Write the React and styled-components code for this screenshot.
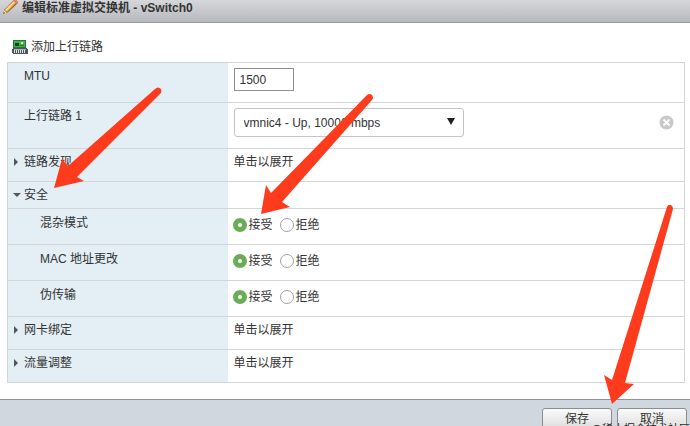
import { useState } from 'react';
import styled, { createGlobalStyle } from 'styled-components';

const GlobalStyle = createGlobalStyle`
  * {
    box-sizing: border-box;
  }

  body {
    margin: 0;
    background: #ffffff;
    color: #333333;
    font-family: "Liberation Sans", "Noto Sans CJK SC", sans-serif;
    font-size: 12px;
    line-height: 18px;
  }

  button,
  input,
  select {
    font: inherit;
    color: inherit;
  }
`;

const Dialog = styled.main`
  position: relative;
  display: flex;
  flex-direction: column;
  height: 100vh;
  overflow: hidden;
`;

const TitleBar = styled.header`
  display: flex;
  flex-shrink: 0;
  align-items: flex-start;
  gap: 4px;
  height: 23px;
  padding-left: 2px;
  background: linear-gradient(#d6d7db, #b7b8bd);
  border-bottom: 1px solid #999a9d;
`;

const Title = styled.h1`
  margin: 0;
  font-size: 12px;
  line-height: 16px;
  font-weight: bold;
`;

const Content = styled.div`
  flex: 1;
  padding: 15px 5px 0 7px;
`;

const AddUplink = styled.button`
  display: flex;
  align-items: center;
  gap: 3px;
  height: 18px;
  margin: 0 0 6px 5px;
  padding: 0;
  border: none;
  background: none;
  cursor: pointer;
`;

const Settings = styled.table`
  width: 100%;
  table-layout: fixed;
  border-collapse: collapse;
  border: 1px solid #d4d5d7;
`;

const Row = styled.tr`
  height: ${props => props.$height}px;
  border-top: 1px solid #d4d5d7;
`;

const LabelCell = styled.th`
  width: 220px;
  padding: ${props => (props.$nested ? 5 : 4)}px 0 0 ${props => (props.$nested ? 32 : props.$expander ? 5 : 16)}px;
  background: #e3eef5;
  font-weight: normal;
  text-align: left;
  vertical-align: top;
`;

const ValueCell = styled.td`
  padding: ${props => props.$top || 4}px 10px 0 ${props => props.$left || 6}px;
  vertical-align: top;
`;

const Expander = styled.button`
  display: flex;
  align-items: center;
  gap: 3px;
  padding: 0;
  border: none;
  background: none;
  cursor: pointer;
`;

const MtuInput = styled.input`
  display: block;
  width: 60px;
  height: 23px;
  padding: 0 5px;
  border: 1px solid #8e8e8e;
  background: #ffffff;
`;

const UplinkLine = styled.div`
  display: flex;
  align-items: center;
  justify-content: space-between;
`;

const SelectBox = styled.div`
  position: relative;
  width: 230px;
`;

const Select = styled.select`
  display: block;
  width: 100%;
  height: 29px;
  padding: 0 24px 0 9px;
  appearance: none;
  border: 1px solid #c4c4c4;
  border-radius: 3px;
  background: #ffffff;
`;

const SelectArrow = styled.svg`
  position: absolute;
  top: 10px;
  right: 9px;
  pointer-events: none;
`;

const RemoveButton = styled.button`
  display: flex;
  padding: 0;
  border: none;
  background: none;
  cursor: pointer;
`;

const Choices = styled.div`
  display: flex;
  gap: 7px;
`;

const Choice = styled.label`
  display: flex;
  align-items: center;
  gap: 2px;
`;

const Radio = styled.input`
  width: 14px;
  height: 14px;
  margin: 0;
  appearance: none;
  border: 1px solid #a3a3a3;
  border-radius: 50%;
  background: #ffffff;

  &:checked {
    border: 5px solid #6aac57;
  }
`;

const Footer = styled.footer`
  display: flex;
  flex-shrink: 0;
  justify-content: flex-end;
  gap: 5px;
  height: 27px;
  padding: 8px 3px 0;
  border-top: 1px solid #8f9298;
  background: #d0d7df;
`;

const FooterButton = styled.button`
  flex-shrink: 0;
  width: 70px;
  height: 22px;
  padding: 0;
  border: 1px solid #8a8c8f;
  border-radius: 3px;
  background: linear-gradient(#fbfbfb, #dddddd);
`;

const Watermark = styled.div`
  position: absolute;
  right: 0;
  bottom: -12px;
  color: #222222;
  font-size: 11px;
  text-shadow: 0 0 1px #ffffff;
  white-space: nowrap;
`;

const Arrows = styled.svg`
  position: absolute;
  top: 0;
  left: 0;
  overflow: visible;
  pointer-events: none;
`;

const PencilIcon = () => (
  <svg width="16" height="16" viewBox="0 0 16 16" aria-hidden="true">
    <path d="M1 14l1-4L12 0h2l2 2v1L5 13z" fill="#8c5a24" />
    <path d="M3 10l9-9 2 2-9 9z" fill="#f6b545" />
    <path d="M3 10l9-9 1 1-9 9z" fill="#ffe39a" />
    <path d="M2 10l3 3-4 1z" fill="#f7dfc0" />
    <path d="M1 14l1-2 1 1z" fill="#333333" />
    <path d="M11 1l1-1h2l2 2v1l-1 1z" fill="#d98572" />
  </svg>
);

const AdapterIcon = () => (
  <svg width="16" height="14" viewBox="0 0 16 14" aria-hidden="true">
    <path d="M1 0h13v8H1z" fill="#1f7a35" />
    <path d="M2 1h11v6H2z" fill="#45b04d" />
    <path d="M3 3h4v3H3z" fill="#173f26" />
    <path d="M9 2h2v2H9z" fill="#dff0a0" />
    <path d="M8 5h4v1H8z" fill="#1f7a35" />
    <path d="M1 8h14v1h1v5H1v-1H0V9h1z" fill="#4d5660" />
    <path d="M2 9h12v1H2z" fill="#a9b1b9" />
    <path d="M2.5 10v3M4.5 10v3M6.5 10v3M8.5 10v3M10.5 10v3M12.5 10v3" stroke="#dfe4e8" />
  </svg>
);

const Triangle = ({ open }) => (
  <svg width="8" height="8" viewBox="0 0 8 8" aria-hidden="true">
    <path d={open ? 'M0 2h8L4 6z' : 'M1 0l4 4-4 4z'} fill="#555555" />
  </svg>
);

const RemoveIcon = () => (
  <svg width="15" height="15" viewBox="0 0 15 15" aria-hidden="true">
    <circle cx="7.5" cy="7.5" r="7" fill="#c9c9c9" />
    <path d="M4.5 4.5l6 6M10.5 4.5l-6 6" stroke="#ffffff" strokeWidth="1.8" />
  </svg>
);

const policies = [
  { id: 'promiscuous', label: '混杂模式' },
  { id: 'mac', label: 'MAC 地址更改' },
  { id: 'forged', label: '伪传输' },
];

const SectionRow = ({ label, open, height, onToggle }) => (
  <Row $height={height}>
    <LabelCell $expander scope="row">
      <Expander type="button" aria-expanded={open} onClick={onToggle}>
        <Triangle open={open} />
        {label}
      </Expander>
    </LabelCell>
    <ValueCell>{!open && '单击以展开'}</ValueCell>
  </Row>
);

const PolicyRow = ({ id, label }) => (
  <Row $height={36}>
    <LabelCell $nested scope="row">{label}</LabelCell>
    <ValueCell $top={7} $left={5}>
      <Choices role="radiogroup" aria-label={label}>
        <Choice>
          <Radio type="radio" name={id} defaultChecked />
          接受
        </Choice>
        <Choice>
          <Radio type="radio" name={id} />
          拒绝
        </Choice>
      </Choices>
    </ValueCell>
  </Row>
);

export default function App() {
  const [open, setOpen] = useState({ security: true });
  const toggle = key => setOpen(prev => ({ ...prev, [key]: !prev[key] }));

  return (
    <>
      <GlobalStyle />
      <Dialog>
        <TitleBar>
          <PencilIcon />
          <Title>编辑标准虚拟交换机 - vSwitch0</Title>
        </TitleBar>
        <Content>
          <AddUplink type="button">
            <AdapterIcon />
            添加上行链路
          </AddUplink>
          <Settings>
            <tbody>
              <Row $height={40}>
                <LabelCell scope="row"><label htmlFor="mtu">MTU</label></LabelCell>
                <ValueCell $top={5}>
                  <MtuInput id="mtu" defaultValue="1500" />
                </ValueCell>
              </Row>
              <Row $height={46}>
                <LabelCell scope="row"><label htmlFor="uplink">上行链路 1</label></LabelCell>
                <ValueCell $top={5}>
                  <UplinkLine>
                    <SelectBox>
                      <Select id="uplink">
                        <option>vmnic4 - Up, 10000 mbps</option>
                      </Select>
                      <SelectArrow width="8" height="7" viewBox="0 0 8 7" aria-hidden="true">
                        <path d="M0 0h8L4 7z" fill="#222222" />
                      </SelectArrow>
                    </SelectBox>
                    <RemoveButton type="button" aria-label="移除">
                      <RemoveIcon />
                    </RemoveButton>
                  </UplinkLine>
                </ValueCell>
              </Row>
              <SectionRow label="链路发现" height={33} open={!!open.discovery} onToggle={() => toggle('discovery')} />
              <SectionRow label="安全" height={27} open={!!open.security} onToggle={() => toggle('security')} />
              {open.security && policies.map(policy => <PolicyRow key={policy.id} {...policy} />)}
              <SectionRow label="网卡绑定" height={33} open={!!open.teaming} onToggle={() => toggle('teaming')} />
              <SectionRow label="流量调整" height={33} open={!!open.shaping} onToggle={() => toggle('shaping')} />
            </tbody>
          </Settings>
        </Content>
        <Footer>
          <FooterButton type="button">保存</FooterButton>
          <FooterButton type="button">取消</FooterButton>
        </Footer>
        <Watermark>@稀土掘金技术社区</Watermark>
        <Arrows width="690" height="426" viewBox="0 0 690 426" fill="#ff3b1d" aria-hidden="true">
          <path d="M155 89Q158 86 161 89Q162 92 160 94L77 177L84 181L54 188L62 159L68 166Z" />
          <path d="M367 95Q370 93 372 95Q374 98 372 100L282 202L290 207L261 214L266 185L271 193Z" />
          <path d="M667 207Q668 204 671 205Q673 206 673 209L625 383L634 384L612 404L604 375L612 380Z" />
        </Arrows>
      </Dialog>
    </>
  );
}
